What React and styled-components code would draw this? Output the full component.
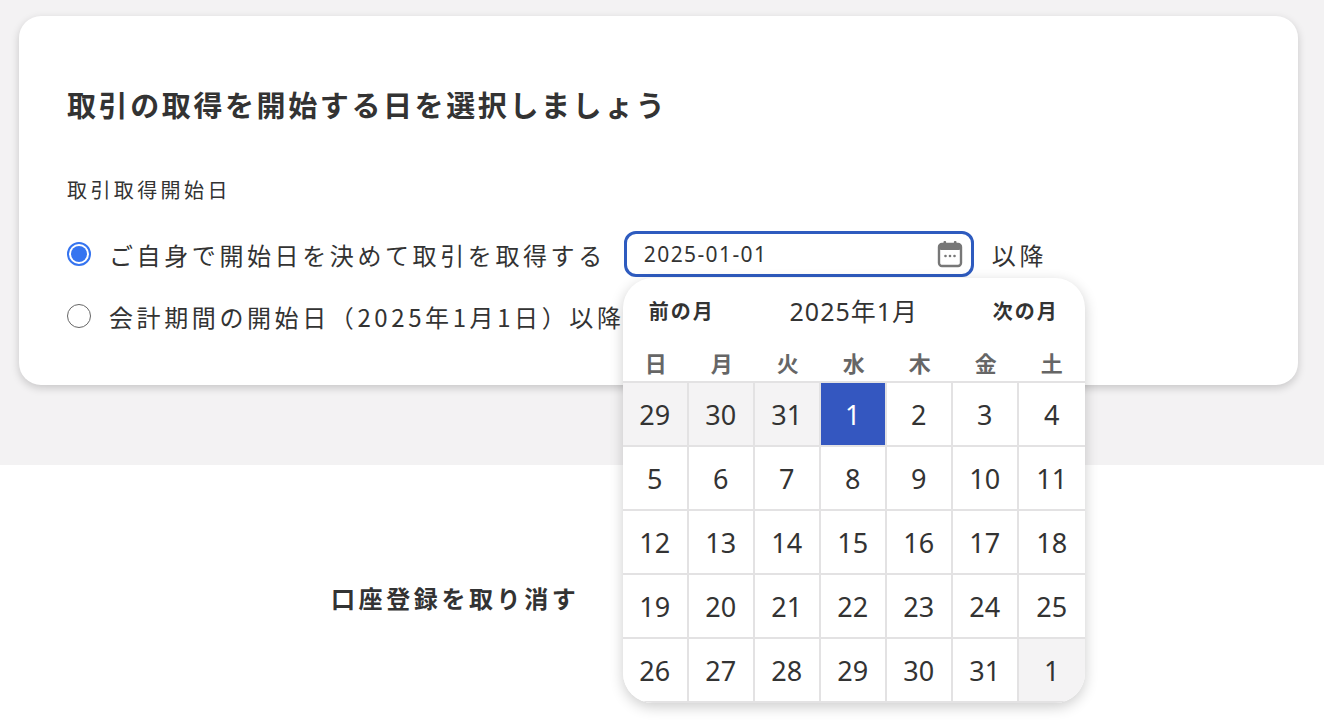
import React from "react";
import styled, { createGlobalStyle } from "styled-components";

const Global = createGlobalStyle`
  html, body { margin: 0; padding: 0; }
  body { font-family: "Noto Sans CJK JP", "Noto Sans", sans-serif; color: #333; background: #fff; min-height: 720px; }
`;

const Top = styled.div`
  background: #f3f2f3;
  padding: 16px 26px 80px 19px;
  height: 465px;
  box-sizing: border-box;
`;
const Card = styled.div`
  background: #fff;
  border-radius: 22px;
  box-shadow: 0 3px 8px rgba(0,0,0,0.18);
  padding: 68px 48px 44px;
  height: 369px;
  box-sizing: border-box;
`;
const Title = styled.h1`
  margin: 0 0 53px;
  font-size: 29px;
  letter-spacing: 2.6px;
  font-weight: 700;
  line-height: 40px;
  color: #333;
`;
const Label = styled.div`
  font-size: 20px;
  letter-spacing: 3.4px;
  line-height: 26px;
  margin-bottom: 27px;
`;
const Row = styled.div`
  display: flex;
  align-items: center;
  height: 48px;
  margin-bottom: 14px;
  font-size: 24px;
  letter-spacing: 3.6px;
  gap: 18px;
`;
const Radio = styled.span`
  width: 24px; height: 24px;
  box-sizing: border-box;
  border-radius: 50%;
  border: ${p => p.$on ? "2px solid #3574f0" : "1.5px solid #666"};
  background: #fff;
  display: flex; align-items: center; justify-content: center;
  flex-shrink: 0;
  &::after {
    content: "";
    display: ${p => p.$on ? "block" : "none"};
    width: 16px; height: 16px; border-radius: 50%;
    background: #3574f0;
  }
`;
const InputWrap = styled.div`
  position: relative;
  letter-spacing: 0;
`;
const Input = styled.div`
  width: 350px; height: 46px;
  box-sizing: border-box;
  border: 3px solid #2e5bbf;
  border-radius: 12px;
  display: flex; align-items: center; justify-content: space-between;
  padding: 0 8px 0 17px;
  font-family: "Noto Sans", sans-serif;
  font-size: 21px;
  letter-spacing: 1.4px;
  color: #333;
`;
const Pop = styled.div`
  position: absolute;
  top: 47px; left: -1px;
  width: 462px;
  background: #fff;
  border-radius: 30px;
  overflow: hidden;
  box-shadow: 0 4px 14px rgba(0,0,0,0.2);
  z-index: 5;
`;
const Head = styled.div`
  display: flex; justify-content: space-between; align-items: center;
  height: 64px;
  padding: 0 26px;
  font-size: 20px;
  letter-spacing: 2px;
`;
const Nav = styled.span` font-weight: 700; `;
const Month = styled.span` font-family: "Noto Sans", "Noto Sans CJK JP", sans-serif; font-size: 25px; letter-spacing: 1px; `;
const Weeks = styled.div`
  display: grid; grid-template-columns: repeat(7, 1fr);
  height: 39px; align-items: center;
  text-align: center; font-size: 22px; font-weight: 700; color: #666;
  border-bottom: 2px solid #e3e2e3;
`;
const Grid = styled.div`
  display: grid; grid-template-columns: repeat(7, 1fr);
  grid-auto-rows: 64px;
`;
const Cell = styled.div`
  display: flex; align-items: center; justify-content: center;
  font-family: "Noto Sans", sans-serif;
  font-size: 27px;
  border-right: 2px solid #e3e2e3;
  border-bottom: 2px solid #e3e2e3;
  &:nth-child(7n) { border-right: none; }
  background: ${p => p.$sel ? "#3457c0" : p.$out ? "#f4f3f4" : "#fff"};
  color: ${p => p.$sel ? "#fff" : "#333"};
`;
const Bottom = styled.div`
  display: flex; padding: 115px 0 0 331px;
`;
const Cancel = styled.div` font-size: 24px; letter-spacing: 3.6px; font-weight: 700; `;

const days = [];
[29,30,31].forEach(d => days.push({ d, out: true }));
for (let i = 1; i <= 31; i++) days.push({ d: i, sel: i === 1 });
days.push({ d: 1, out: true });

const CalIcon = () => (
  <svg width="26" height="28" viewBox="0 0 26 28">
    <rect x="2" y="4" width="22" height="22" rx="3" fill="none" stroke="#777" strokeWidth="2.4" />
    <rect x="2" y="4" width="22" height="6" rx="2" fill="#777" />
    <rect x="6.5" y="1" width="2.6" height="5" rx="1" fill="#777" />
    <rect x="16.9" y="1" width="2.6" height="5" rx="1" fill="#777" />
    <circle cx="8.5" cy="16" r="1.3" fill="#777" />
    <circle cx="13" cy="16" r="1.3" fill="#777" />
    <circle cx="17.5" cy="16" r="1.3" fill="#777" />
  </svg>
);

export default function App() {
  return (
    <>
      <Global />
      <Top>
        <Card>
          <Title>取引の取得を開始する日を選択しましょう</Title>
          <Label>取引取得開始日</Label>
          <Row>
            <Radio $on />
            <span>ご自身で開始日を決めて取引を取得する</span>
            <InputWrap>
              <Input>2025-01-01<CalIcon /></Input>
              <Pop>
                <Head><Nav>前の月</Nav><Month>2025年1月</Month><Nav>次の月</Nav></Head>
                <Weeks>{["日","月","火","水","木","金","土"].map(w => <span key={w}>{w}</span>)}</Weeks>
                <Grid>
                  {days.map((x, i) => <Cell key={i} $out={x.out} $sel={x.sel}>{x.d}</Cell>)}
                </Grid>
              </Pop>
            </InputWrap>
            <span>以降</span>
          </Row>
          <Row>
            <Radio />
            <span>会計期間の開始日（2025年1月1日）以降の取引を取得する</span>
          </Row>
        </Card>
      </Top>
      <Bottom><Cancel>口座登録を取り消す</Cancel></Bottom>
    </>
  );
}
